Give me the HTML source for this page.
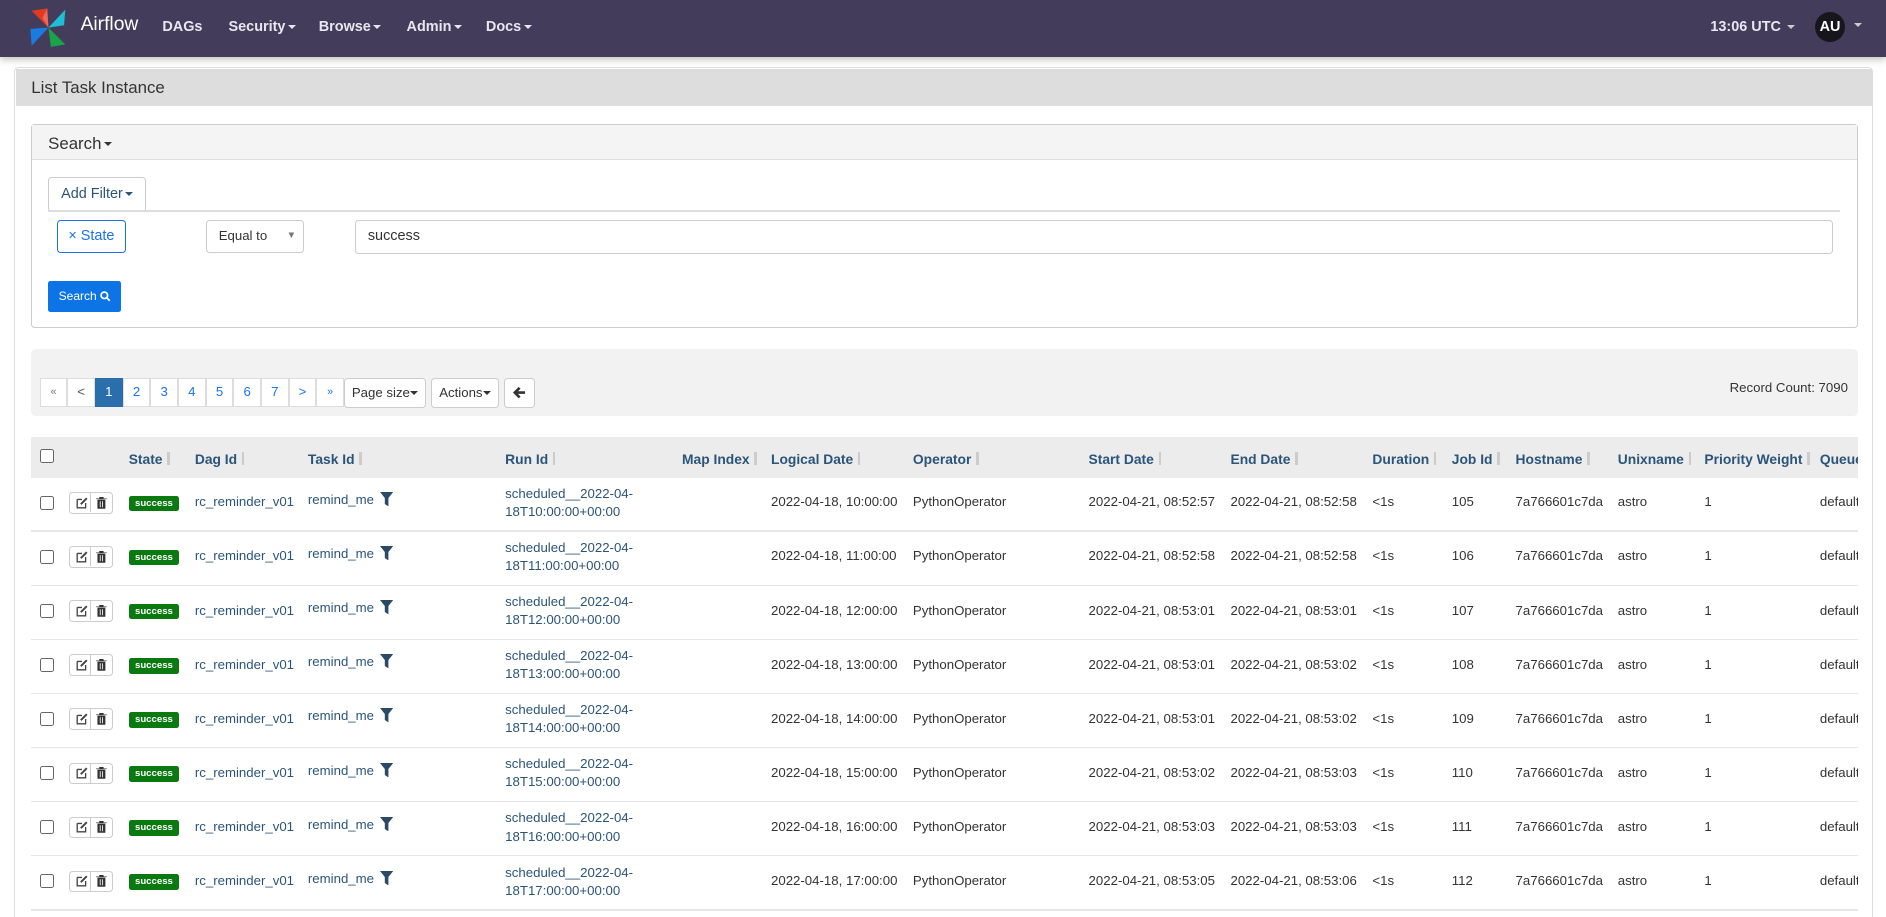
<!DOCTYPE html>
<html><head><meta charset="utf-8"><style>
html,body{margin:0;padding:0;background:#fff;overflow:hidden}
#w{width:1568px;height:762px;position:relative;zoom:1.20281;font-family:"Liberation Sans",Arial,sans-serif;color:#333;font-size:11px}
.a{position:absolute}
.nav{left:0;top:0;width:1568px;height:47px;background:#433d5b;box-shadow:0 2px 6px rgba(0,0,0,.25)}
.ni{color:#e8e6ef;font-weight:bold;font-size:12px;top:16px}
.car{display:inline-block;width:0;height:0;border-left:4px solid transparent;border-right:4px solid transparent;border-top:4px solid currentColor;vertical-align:middle;margin-left:2px}
.btn{border:1px solid #ccc;border-radius:3px;background:#fff;box-sizing:border-box}
.th{top:375px;font-weight:bold;color:#2b5479;font-size:11.5px;white-space:nowrap}
.si{display:inline-block;width:2px;height:11px;background:#ccc;margin-left:4px;vertical-align:-1px}
.lnk{color:#2b5479}
.pg{position:absolute;top:314px;height:24px;width:23px;border:1px solid #ddd;box-sizing:border-box;text-align:center;line-height:22px;color:#1a73e8;font-size:11px;background:#fff}
</style></head><body><div id="w">
<div class="a nav"></div>
<svg class="a" style="left:23px;top:5px" width="34" height="36" viewBox="0 0 34 36">
<path d="M17 18 L3 4 L16 2 Z" fill="#e43921"/><path d="M17 18 L16 2 L12 10Z" fill="#f28b82" opacity=".6"/>
<path d="M17 18 L31 3 L30 16 Z" fill="#1fbed6"/>
<path d="M17 18 L3 33 L2 19 Z" fill="#1a7ce0"/>
<path d="M17 18 L31 32 L19 34 Z" fill="#19a34a"/>
</svg>
<div class="a" style="left:67px;top:12px;color:#fff;font-size:16px">Airflow</div>
<div class="a ni" style="left:135px">DAGs</div>
<div class="a ni" style="left:190px">Security<span class="car"></span></div>
<div class="a ni" style="left:265px">Browse<span class="car"></span></div>
<div class="a ni" style="left:338px">Admin<span class="car"></span></div>
<div class="a ni" style="left:404px">Docs<span class="car"></span></div>
<div class="a ni" style="left:1422px">13:06 UTC <span class="car" style="color:#ccc"></span></div>
<div class="a" style="left:1509px;top:10px;width:25px;height:25px;border-radius:50%;background:#17161d;color:#fff;font-weight:bold;font-size:12px;text-align:center;line-height:25px">AU</div>
<div class="a" style="left:1539px;top:14px;color:#ccc"><span class="car"></span></div>

<div class="a" style="left:12px;top:56px;width:1545px;height:720px;border:1px solid #ddd;border-radius:4px;box-sizing:border-box"></div>
<div class="a" style="left:13px;top:57px;width:1543px;height:31px;background:#ddd"></div>
<div class="a" style="left:26px;top:65px;font-size:14px;color:#333">List Task Instance</div>

<div class="a" style="left:26px;top:103px;width:1519px;height:170px;border:1px solid #ccc;border-radius:3px;box-sizing:border-box"></div>
<div class="a" style="left:27px;top:104px;width:1517px;height:28px;background:#f4f4f4;border-bottom:1px solid #ddd"></div>
<div class="a" style="left:40px;top:111px;font-size:14px">Search<span class="car"></span></div>
<div class="a btn" style="left:40px;top:147px;width:81px;height:29px;color:#2b5479;line-height:27px;padding-left:10px;font-size:12px">Add Filter<span class="car"></span></div>
<div class="a" style="left:40px;top:175px;width:1490px;height:1px;background:#ddd"></div>
<div class="a" style="left:47px;top:183px;width:58px;height:27px;border:1px solid #1a73e8;border-radius:3px;box-sizing:border-box;color:#1a73e8;line-height:25px;text-align:center;font-size:12px">× State</div>
<div class="a btn" style="left:171px;top:183px;width:82px;height:27px;line-height:25px;padding-left:10px">Equal to<span style="position:absolute;right:6px;font-size:8px;color:#777">▼</span></div>
<div class="a btn" style="left:295px;top:183px;width:1229px;height:28px;line-height:26px;padding-left:10px;font-size:12px">success</div>
<div class="a" style="left:40px;top:234px;width:61px;height:25px;background:#0d74e6;border-radius:2px;color:#fff;font-size:10px;line-height:25px;text-align:center">Search <svg width="9" height="9" viewBox="0 0 10 10" style="vertical-align:-1px"><circle cx="4" cy="4" r="3" fill="none" stroke="#fff" stroke-width="1.6"/><path d="M6 6 L9 9" stroke="#fff" stroke-width="1.6"/></svg></div>

<div class="a" style="left:26px;top:290px;width:1519px;height:56px;background:#f2f2f2;border-radius:4px"></div>
<div class="pg" style="left:33px;color:#777;font-size:9px">«</div>
<div class="pg" style="left:56px;color:#555">&lt;</div>
<div class="pg" style="left:79px;background:#2a6eab;color:#fff;border-color:#2a6eab">1</div>
<div class="pg" style="left:102px">2</div><div class="pg" style="left:125px">3</div><div class="pg" style="left:148px">4</div><div class="pg" style="left:171px">5</div><div class="pg" style="left:194px">6</div><div class="pg" style="left:217px">7</div>
<div class="pg" style="left:240px">&gt;</div><div class="pg" style="left:263px;font-size:9px">»</div>
<div class="a btn" style="left:286px;top:314px;width:68px;height:25px;line-height:23px;text-align:center;font-size:11px">Page size<span class="car" style="margin:0"></span></div>
<div class="a btn" style="left:358px;top:314px;width:57px;height:25px;line-height:23px;text-align:center;font-size:11px">Actions<span class="car" style="margin:0"></span></div>
<div class="a btn" style="left:419px;top:314px;width:26px;height:25px"><svg style="position:absolute;left:7px;top:6px" width="11" height="11" viewBox="0 0 11 11"><path d="M10 5.5H2M5.5 1.5L1.5 5.5L5.5 9.5" fill="none" stroke="#333" stroke-width="2.2"/></svg></div>
<div class="a" style="left:1438px;top:316px;font-size:11px">Record Count: 7090</div>

<div class="a" style="left:26px;top:363px;width:1519px;height:34px;background:#ececec"></div>
<div class="a" style="left:33px;top:373px;width:10px;height:10px;border:1px solid #666;border-radius:2px;background:#fff"></div>
<div class="a th" style="left:107px">State<span class="si"></span></div>
<div class="a th" style="left:162px">Dag Id<span class="si"></span></div>
<div class="a th" style="left:256px">Task Id<span class="si"></span></div>
<div class="a th" style="left:420px">Run Id<span class="si"></span></div>
<div class="a th" style="left:567px">Map Index<span class="si"></span></div>
<div class="a th" style="left:641px">Logical Date<span class="si"></span></div>
<div class="a th" style="left:759px">Operator<span class="si"></span></div>
<div class="a th" style="left:905px">Start Date<span class="si"></span></div>
<div class="a th" style="left:1023px">End Date<span class="si"></span></div>
<div class="a th" style="left:1141px">Duration<span class="si"></span></div>
<div class="a th" style="left:1207px">Job Id<span class="si"></span></div>
<div class="a th" style="left:1260px">Hostname<span class="si"></span></div>
<div class="a th" style="left:1345px">Unixname<span class="si"></span></div>
<div class="a th" style="left:1417px">Priority Weight<span class="si"></span></div>
<div class="a" style="left:1513px;top:363px;width:32px;height:34px;overflow:hidden"><div class="a th" style="left:0;top:12px">Queue</div></div>
<div id="rows"></div>
<script>
var d=[["10:00:00","08:52:57","08:52:58",105],["11:00:00","08:52:58","08:52:58",106],["12:00:00","08:53:01","08:53:01",107],["13:00:00","08:53:01","08:53:02",108],["14:00:00","08:53:01","08:53:02",109],["15:00:00","08:53:02","08:53:03",110],["16:00:00","08:53:03","08:53:03",111],["17:00:00","08:53:05","08:53:06",112]];
var h="";
d.forEach(function(r,i){var y=397+i*45,c=y+21;
h+='<div class="a" style="left:26px;top:'+(y+44)+'px;width:1519px;height:1px;background:#e6e6e6"></div>';
h+='<div class="a" style="left:33px;top:'+(c-6)+'px;width:10px;height:10px;border:1px solid #666;border-radius:2px"></div>';
h+='<div class="a btn" style="left:57px;top:'+(c-9)+'px;width:37px;height:18px;border-radius:3px"><svg style="position:absolute;left:5px;top:3px" width="10" height="10" viewBox="0 0 10 10"><path d="M1 2h4M1 2v7h7V5" fill="none" stroke="#444" stroke-width="1.1"/><path d="M4 6l5-5" stroke="#444" stroke-width="1.6"/></svg><span style="position:absolute;left:17px;top:0;width:1px;height:16px;background:#ccc"></span><svg style="position:absolute;left:22px;top:3px" width="9" height="10" viewBox="0 0 9 10"><path d="M0 1.5h9M3 1.5V0h3v1.5M1.5 2.5h6v7h-6z" fill="#333" stroke="#333" stroke-width=".6"/><path d="M3.5 3.5v5M5.5 3.5v5" stroke="#fff" stroke-width=".7"/></svg></div>';
h+='<div class="a" style="left:107px;top:'+(c-6)+'px;width:42px;height:13px;background:#0a7a10;border-radius:2px;color:#fff;font-size:8px;font-weight:bold;text-align:center;line-height:13px">success</div>';
h+='<div class="a lnk" style="left:162px;top:'+(c-7)+'px">rc_reminder_v01</div>';
h+='<div class="a lnk" style="left:256px;top:'+(c-9)+'px">remind_me <svg width="11" height="12" viewBox="0 0 11 12" style="vertical-align:-2px;margin-left:2px"><path d="M0 0h11L7 5v7L4 10V5Z" fill="#2b4a66"/></svg></div>';
h+='<div class="a lnk" style="left:420px;top:'+(c-15)+'px;line-height:15px">scheduled__2022-04-<br>18T'+r[0]+'+00:00</div>';
h+='<div class="a" style="left:641px;top:'+(c-7)+'px">2022-04-18, '+r[0]+'</div>';
h+='<div class="a" style="left:759px;top:'+(c-7)+'px">PythonOperator</div>';
h+='<div class="a" style="left:905px;top:'+(c-7)+'px">2022-04-21, '+r[1]+'</div>';
h+='<div class="a" style="left:1023px;top:'+(c-7)+'px">2022-04-21, '+r[2]+'</div>';
h+='<div class="a" style="left:1141px;top:'+(c-7)+'px">&lt;1s</div>';
h+='<div class="a" style="left:1207px;top:'+(c-7)+'px">'+r[3]+'</div>';
h+='<div class="a" style="left:1260px;top:'+(c-7)+'px">7a766601c7da</div>';
h+='<div class="a" style="left:1345px;top:'+(c-7)+'px">astro</div>';
h+='<div class="a" style="left:1417px;top:'+(c-7)+'px">1</div>';
h+='<div class="a" style="left:1513px;top:'+(c-7)+'px;width:32px;overflow:hidden">default</div>';
});
document.getElementById("rows").outerHTML=h;
</script>
</div></body></html>
